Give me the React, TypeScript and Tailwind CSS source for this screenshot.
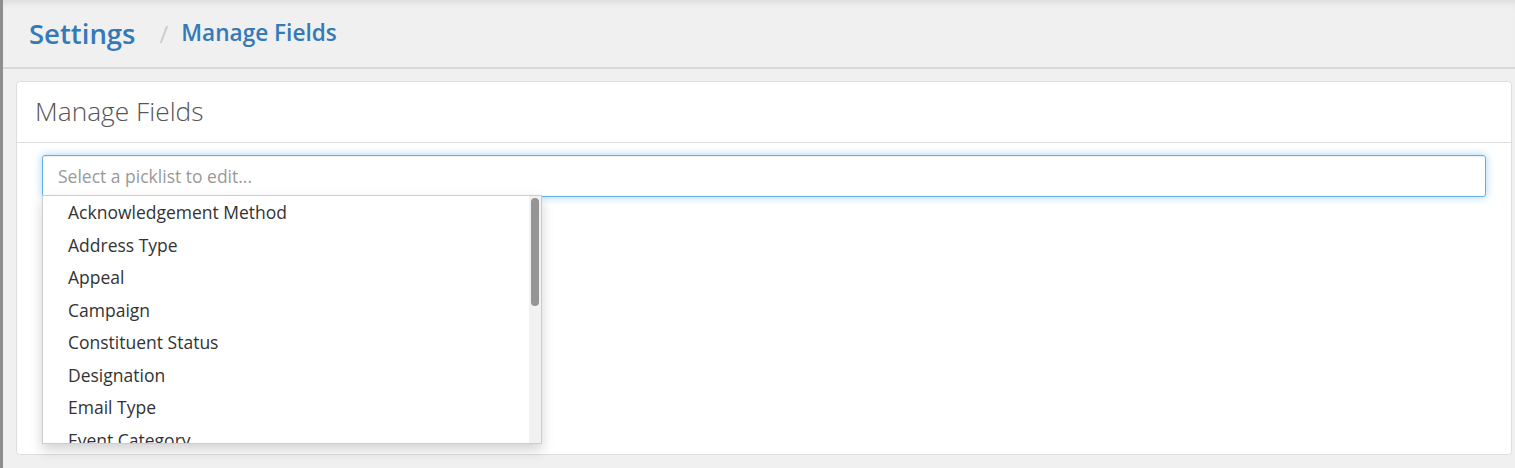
import React from 'react';

const picklists = [
  'Acknowledgement Method',
  'Address Type',
  'Appeal',
  'Campaign',
  'Constituent Status',
  'Designation',
  'Email Type',
  'Event Category',
];

export default function App() {
  return (
    <div className="min-h-screen bg-[#f0f0f0] border-l-[3px] border-[#8e8e8e] font-['Open_Sans',sans-serif]">
      {/* Breadcrumb header */}
      <header className="h-[69px] border-b-2 border-[#d9d9d9] flex items-center pl-[26px] shadow-[inset_0_7px_8px_-6px_rgba(0,0,0,0.12)]">
        <a className="text-[27.5px] font-semibold text-[#337ab7] leading-none">Settings</a>
        <span className="ml-[24px] mr-[13px] text-[24px] text-[#cccccc] leading-none">/</span>
        <span className="text-[22.6px] font-semibold text-[#337ab7] leading-none">Manage Fields</span>
      </header>

      <div className="pl-[13px] pr-[3px] pt-[12px] pb-[13px]">
        <div className="bg-white border border-[#dddddd] rounded-[4px] h-[374px]">
          <div className="h-[61px] border-b border-[#dddddd] flex items-center px-[18px]">
            <h2 className="text-[26.3px] font-light text-[#555555]">Manage Fields</h2>
          </div>

          <div className="px-[25px] pt-[12px]">
            <div className="relative">
              <div className="h-[42px] border border-[#66afe9] rounded-[3px] flex items-center px-[15px] shadow-[inset_0_1px_1px_rgba(0,0,0,0.075),0_0_8px_rgba(102,175,233,0.6)]">
                <span className="text-[17.5px] text-[#999999]">Select a picklist to edit...</span>
              </div>

              {/* Open picklist menu, scrolled to top */}
              <div className="absolute left-0 top-[40px] w-[500px] h-[249px] bg-white border border-[#cccccc] shadow-[0_6px_12px_rgba(0,0,0,0.175)] flex overflow-hidden">
                <ul className="flex-1 overflow-hidden">
                  {picklists.map((name) => (
                    <li
                      key={name}
                      className="h-[32.5px] flex items-center pl-[25px] text-[17.5px] text-[#333333] whitespace-nowrap"
                    >
                      {name}
                    </li>
                  ))}
                </ul>
                <div className="w-[12px] bg-[#f1f1f1] pt-[2px] flex justify-center">
                  <div className="w-[8px] h-[108px] rounded-full bg-[#959595]" />
                </div>
              </div>
            </div>
          </div>
        </div>
      </div>
    </div>
  );
}
